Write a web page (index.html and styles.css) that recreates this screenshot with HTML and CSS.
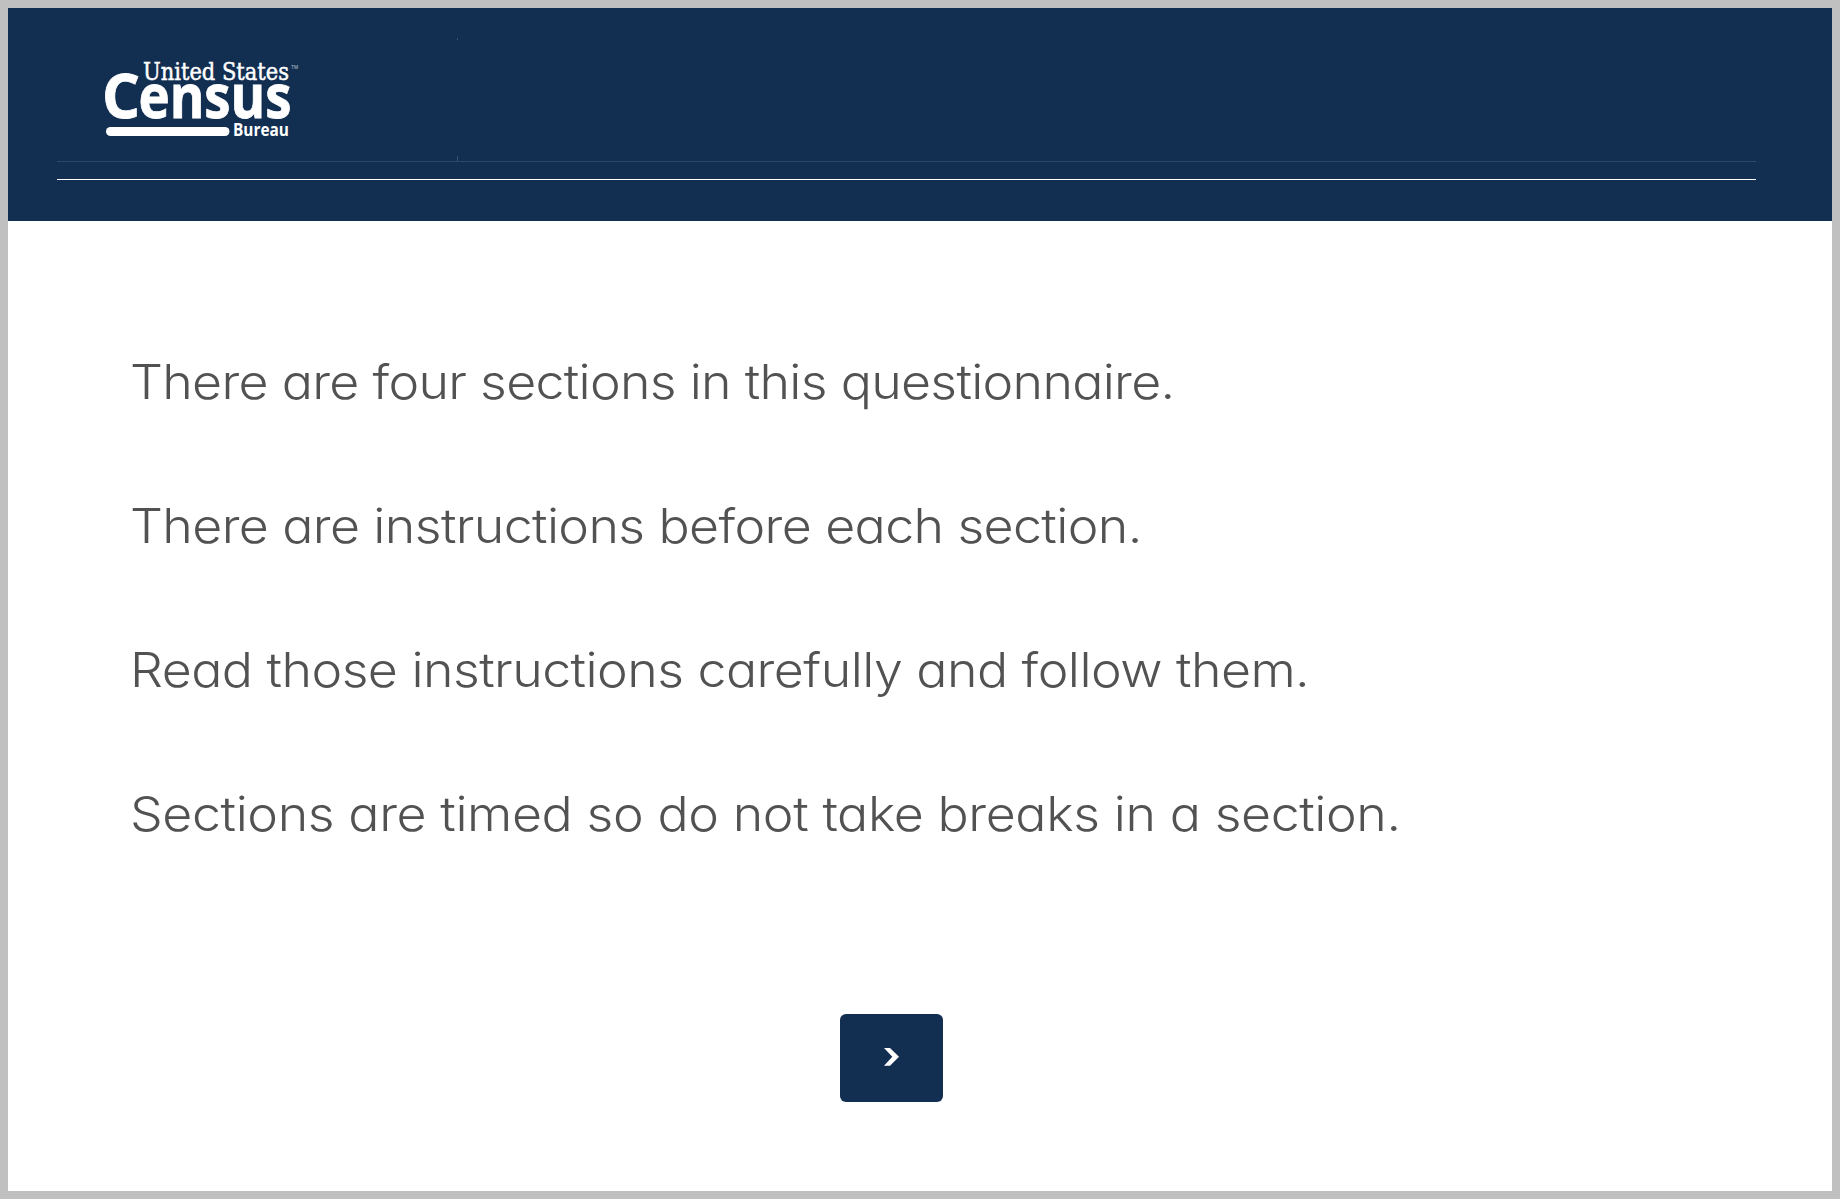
FILE: index.html
```html
<!DOCTYPE html>
<html lang="en">
  <head>
    <meta charset="UTF-8" />
    <meta name="viewport" content="width=device-width, initial-scale=1.0" />
    <title>United States Census Bureau</title>
    <link rel="stylesheet" href="styles.css">
  </head>
  <body>
    <div class="page">
      <header class="header">
        <div class="banner">
          <svg class="logo" width="200" height="82" viewBox="0 0 200 82" role="img" aria-label="United States Census Bureau">
            <text class="logo-states" x="43" y="23.5" textLength="146" lengthAdjust="spacingAndGlyphs">United States</text>
            <text class="logo-tm" x="191" y="13" textLength="7" lengthAdjust="spacingAndGlyphs">TM</text>
            <text class="logo-census" x="2" y="62" textLength="38" lengthAdjust="spacingAndGlyphs">C</text>
            <text class="logo-census" x="38.5" y="62" textLength="153" lengthAdjust="spacingAndGlyphs">ensus</text>
            <rect x="6" y="71" width="123.5" height="9" rx="4.5" />
            <text class="logo-bureau" x="133" y="80" textLength="56" lengthAdjust="spacingAndGlyphs">Bureau</text>
          </svg>
          <div class="divider">
            <span class="tick tick-top"></span>
            <span class="tick"></span>
          </div>
        </div>
      </header>

      <main class="content">
        <p class="line line-1">There are four sections in this questionnaire.</p>
        <p class="line line-2">There are instructions before each section.</p>
        <p class="line line-3">Read those instructions carefully and follow them.</p>
        <p class="line line-4">Sections are timed so do not take breaks in a section.</p>

        <button type="button" class="next" aria-label="Next">
          <svg width="15" height="18" viewBox="0 0 15 18">
            <path d="M0 0H6L15 8.7L6 17.7H0L8.3 8.7Z" />
          </svg>
        </button>
      </main>
    </div>
  </body>
</html>
```

FILE: styles.css
```css
* {
  box-sizing: border-box;
}

body {
  margin: 0;
  font-family: Inter, "Open Sans", sans-serif;
  color: #525252;
}

.page {
  height: 1199px;
  border: 8px solid #c0c0c0;
  background-color: #ffffff;
}

.header {
  height: 213px;
  padding: 30px 76px 0 49px;
  background-color: #122e51;
}

.banner {
  display: flex;
  height: 142px;
  border-bottom: 1px solid #ffffff;
}

.logo {
  flex-shrink: 0;
  margin: 18px 0 0 43px;
  overflow: visible;
  fill: #ffffff;
}

.logo-states {
  font-family: "DejaVu Serif", serif;
  font-size: 24px;
  stroke: #ffffff;
  stroke-width: 0.5px;
}

.logo-tm {
  font-size: 5px;
  opacity: 0.7;
}

.logo-census {
  font-family: "Open Sans", sans-serif;
  font-size: 60px;
  font-weight: 700;
  stroke: #ffffff;
  stroke-width: 0.8px;
}

.logo-bureau {
  font-family: "Open Sans", sans-serif;
  font-size: 17.5px;
  font-weight: 700;
}

/* faint rule and ticks next to the logo */
.divider {
  display: flex;
  flex-shrink: 0;
  flex-direction: column;
  justify-content: space-between;
  width: 1699px;
  height: 124px;
  margin-left: -243px;
  padding-left: 400px;
  border-bottom: 1px solid #2e4868;
}

.tick {
  width: 1px;
  height: 5px;
  background-color: #3a5371;
}

.tick-top {
  height: 2px;
}

.content {
  display: flex;
  flex-direction: column;
  align-items: flex-start;
  padding: 125px 0 0 122px;
}

.line {
  margin: 0 0 72px;
  font-size: 48px;
  font-weight: 300;
  line-height: 72px;
  white-space: nowrap;
  /* single-storey a, slightly widened letters */
  font-feature-settings: "cv11";
  transform: scaleX(1.08);
  transform-origin: left;
}

.line-1 {
  letter-spacing: -0.65px;
}

.line-2 {
  letter-spacing: -0.57px;
}

.line-3 {
  letter-spacing: -0.5px;
}

.line-4 {
  letter-spacing: -0.37px;
}

.next {
  display: flex;
  align-items: center;
  justify-content: center;
  width: 103px;
  height: 88px;
  margin: 92px 0 0 710px;
  padding: 0 0 2px;
  border: none;
  border-radius: 6px;
  background-color: #122e51;
  cursor: pointer;
}

.next svg {
  fill: #ffffff;
}
```
